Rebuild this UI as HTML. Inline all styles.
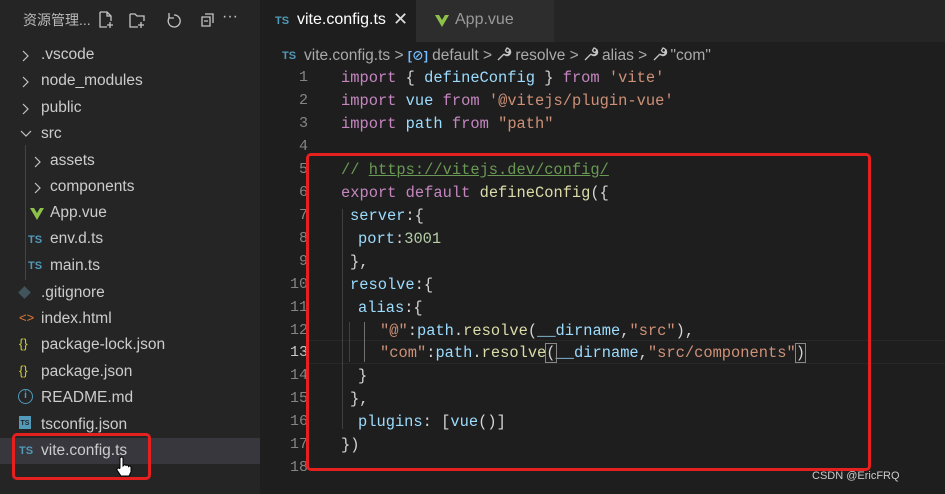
<!DOCTYPE html>
<html><head><meta charset="utf-8"><style>
*{margin:0;padding:0;box-sizing:border-box}
body{width:945px;height:494px;background:#1e1e1e;position:relative;overflow:hidden;font-family:"Liberation Sans","Noto Sans CJK SC",sans-serif;color:#ccc}
.side{position:absolute;left:0;top:0;width:260px;height:494px;background:#252526}
.hdr{position:absolute;left:23px;top:10px;font-size:14px;color:#bbb}
.row{position:absolute;font-size:15.5px;color:#ccc;white-space:nowrap}
.chev{position:absolute;width:12px;height:14px}
.ts{font-family:"Liberation Sans",sans-serif;font-weight:bold;font-size:11px;color:#519aba;position:absolute}
.tabs{position:absolute;left:260px;top:0;width:685px;height:42px;background:#252526}
.ln{position:absolute;width:308px;text-align:right;color:#858585;font-family:"Liberation Mono",monospace;font-size:15px}
.cl{position:absolute;left:341px;white-space:pre;font-family:"Liberation Mono",monospace;font-size:15.4px;color:#d4d4d4}
.k{color:#c586c0}.v{color:#9cdcfe}.s{color:#ce9178}.f{color:#dcdcaa}.c{color:#6a9955}.n{color:#b5cea8}
.wr{display:inline-block;vertical-align:-2px;margin-right:3px}
</style></head><body>
<svg width="0" height="0" style="position:absolute"><defs>
<symbol id="cr" viewBox="0 0 12 14"><path d="M3 2l5 5-5 5" fill="none" stroke="#c5c5c5" stroke-width="1.2"/></symbol>
<symbol id="wr" viewBox="0 0 16 16"><path d="M2 14l6-6M8 8a3.5 3.5 0 1 0 3-6l-1.5 2.5 1 1.5 2 .5L14 4a3.5 3.5 0 0 1-6 4" fill="none" stroke="#c5c5c5" stroke-width="1.3"/></symbol>
</defs></svg>
<div class="side">
<div class="hdr">资源管理...</div>
<svg style="position:absolute;left:98px;top:11px" width="150" height="18" fill="none" stroke="#c5c5c5" stroke-width="1.3">
<path d="M2 1h7l4 4v5M2 1v15h7M9 1v4h4M12 11v6M9 14h6"/>
<path d="M32 3h5l2 2h7v5M32 3v13h8M43 11v6M40 14h6"/>
<path d="M76 4a6 6 0 1 1-5 3M71 2v5h5"/>
<path d="M104 6h8v9h-8zM107 3h8v9M106 10h4"/>
</svg>
<div style="position:absolute;left:222px;top:8px;font-size:16px;color:#c5c5c5">···</div>
<svg class="chev" style="left:20px;top:49px"><use href="#cr"/></svg><div class="row" style="left:41px;top:46px">.vscode</div>
<svg class="chev" style="left:20px;top:75px"><use href="#cr"/></svg><div class="row" style="left:41px;top:72px">node_modules</div>
<svg class="chev" style="left:20px;top:102px"><use href="#cr"/></svg><div class="row" style="left:41px;top:99px">public</div>
<svg class="chev" style="left:20px;top:127px;transform:rotate(90deg)"><use href="#cr"/></svg><div class="row" style="left:41px;top:125px">src</div>
<div style="position:absolute;left:25px;top:145px;width:1px;height:135px;background:#444"></div>
<svg class="chev" style="left:32px;top:155px"><use href="#cr"/></svg><div class="row" style="left:50px;top:152px">assets</div>
<svg class="chev" style="left:32px;top:181px"><use href="#cr"/></svg><div class="row" style="left:50px;top:178px">components</div>
<svg style="position:absolute;left:30px;top:208px" width="14" height="12"><path d="M0 0h4l3 5 3-5h4L7 12z" fill="#8dc149"/></svg><div class="row" style="left:50px;top:204px">App.vue</div>
<div class="ts" style="left:28px;top:234px">TS</div><div class="row" style="left:50px;top:230px">env.d.ts</div>
<div class="ts" style="left:28px;top:260px">TS</div><div class="row" style="left:50px;top:257px">main.ts</div>
<div style="position:absolute;left:20px;top:288px;width:9px;height:9px;background:#41535b;transform:rotate(45deg)"></div><div class="row" style="left:41px;top:284px">.gitignore</div>
<div class="row" style="left:19px;top:310px;color:#e37933;font-size:13px">&lt;&gt;</div><div class="row" style="left:41px;top:310px">index.html</div>
<div class="row" style="left:19px;top:336px;color:#cbcb41;font-size:13px">{}</div><div class="row" style="left:41px;top:336px">package-lock.json</div>
<div class="row" style="left:19px;top:363px;color:#cbcb41;font-size:13px">{}</div><div class="row" style="left:41px;top:363px">package.json</div>
<div style="position:absolute;left:18px;top:389px;width:15px;height:15px;border:1.5px solid #519aba;border-radius:50%;color:#519aba;font-size:10px;text-align:center;line-height:12px;font-weight:bold">i</div><div class="row" style="left:41px;top:389px">README.md</div>
<div style="position:absolute;left:19px;top:416px;width:12px;height:13px;background:#519aba;color:#252526;font-size:7px;font-weight:bold;text-align:center;padding-top:4px">TS</div><div class="row" style="left:41px;top:416px">tsconfig.json</div>
<div style="position:absolute;left:0;top:438px;width:260px;height:26px;background:#37373d"></div>
<div class="ts" style="left:19px;top:445px">TS</div><div class="row" style="left:41px;top:442px">vite.config.ts</div>
<div style="position:absolute;left:12px;top:433px;width:139px;height:47px;border:3px solid #e5201f;border-radius:5px"></div>
<svg style="position:absolute;left:114px;top:456px" width="18" height="22"><path d="M6 12V2.5a1.5 1.5 0 0 1 3 0V10l1-1a1.5 1.5 0 0 1 2 0.5 1.5 1.5 0 0 1 2.5 1 1.5 1.5 0 0 1 2.5 1.5v4l-2 4H7l-4-6a1.5 1.5 0 0 1 2.5-1.5z" fill="#fff" stroke="#000" stroke-width="1"/></svg>
</div>
<div class="tabs">
<div style="position:absolute;left:0;top:0;width:156px;height:42px;background:#1e1e1e"></div>
<div class="ts" style="left:15px;top:15px">TS</div>
<div style="position:absolute;left:37px;top:11px;font-size:16px;color:#fff">vite.config.ts</div>
<div style="position:absolute;left:133px;top:9px;font-size:18px;color:#ddd">✕</div>
<div style="position:absolute;left:156px;top:0;width:138px;height:42px;background:#2d2d2d"></div>
<svg style="position:absolute;left:175px;top:15px" width="14" height="12"><path d="M0 0h4l3 5 3-5h4L7 12z" fill="#8dc149"/></svg>
<div style="position:absolute;left:195px;top:11px;font-size:16px;color:#999">App.vue</div>
</div>
<div class="ts" style="left:282px;top:50px">TS</div>
<div style="position:absolute;left:304px;top:46px;font-size:15.5px;color:#aaa;white-space:nowrap">vite.config.ts &gt; <span style="color:#75beff;font-size:12px;font-weight:bold">[⊘]</span> default &gt; <svg class="wr" width="16" height="16"><use href="#wr"/></svg>resolve &gt; <svg class="wr" width="16" height="16"><use href="#wr"/></svg>alias &gt; <svg class="wr" width="16" height="16"><use href="#wr"/></svg>"com"</div>
<div style="position:absolute;left:308px;top:340px;width:637px;height:24px;border-top:1px solid #282828;border-bottom:1px solid #282828"></div>
<div class="ln" style="top:69px">1</div><div class="ln" style="top:92px">2</div><div class="ln" style="top:115px">3</div><div class="ln" style="top:138px">4</div><div class="ln" style="top:161px">5</div><div class="ln" style="top:184px">6</div><div class="ln" style="top:207px">7</div><div class="ln" style="top:230px">8</div><div class="ln" style="top:253px">9</div><div class="ln" style="top:276px">10</div><div class="ln" style="top:299px">11</div><div class="ln" style="top:322px">12</div><div class="ln" style="top:344px;color:#c6c6c6">13</div><div class="ln" style="top:367px">14</div><div class="ln" style="top:390px">15</div><div class="ln" style="top:413px">16</div><div class="ln" style="top:436px">17</div><div class="ln" style="top:459px">18</div>
<div style="position:absolute;left:342px;top:209px;width:1px;height:220px;background:#404040"></div>
<div style="position:absolute;left:349px;top:322px;width:1px;height:40px;background:#404040"></div>
<div style="position:absolute;left:364px;top:322px;width:1px;height:40px;background:#707070"></div>
<div class="cl" style="top:69px"><span class="k">import</span> { <span class="v">defineConfig</span> } <span class="k">from</span> <span class="s">'vite'</span></div>
<div class="cl" style="top:92px"><span class="k">import</span> <span class="v">vue</span> <span class="k">from</span> <span class="s">'@vitejs/plugin-vue'</span></div>
<div class="cl" style="top:115px"><span class="k">import</span> <span class="v">path</span> <span class="k">from</span> <span class="s">"path"</span></div>
<div class="cl" style="top:161px"><span class="c">// <u>https://vitejs.dev/config/</u></span></div>
<div class="cl" style="top:184px"><span class="k">export</span> <span class="k">default</span> <span class="f">defineConfig</span>({</div>
<div class="cl" style="top:207px;left:350px"><span class="v">server</span>:{</div>
<div class="cl" style="top:230px;left:358px"><span class="v">port</span>:<span class="n">3001</span></div>
<div class="cl" style="top:253px;left:350px">},</div>
<div class="cl" style="top:276px;left:350px"><span class="v">resolve</span>:{</div>
<div class="cl" style="top:299px;left:358px"><span class="v">alias</span>:{</div>
<div class="cl" style="top:322px;left:380px"><span class="s">"@"</span>:<span class="v">path</span>.<span class="f">resolve</span>(<span class="v">__dirname</span>,<span class="s">"src"</span>),</div>
<div class="cl" style="top:344px;left:380px"><span class="s">"com"</span>:<span class="v">path</span>.<span class="f">resolve</span><span style="outline:1px solid #888">(</span><span class="v">__dirname</span>,<span class="s">"src/components"</span><span style="outline:1px solid #888">)</span></div>
<div class="cl" style="top:367px;left:358px">}</div>
<div class="cl" style="top:390px;left:350px">},</div>
<div class="cl" style="top:413px;left:358px"><span class="v">plugins</span>: [<span class="v">vue</span>()]</div>
<div class="cl" style="top:436px">})</div>
<div style="position:absolute;left:306px;top:153px;width:565px;height:318px;border:3px solid #e5201f;border-radius:5px"></div>
<div style="position:absolute;left:812px;top:470px;font-size:11px;color:#ccc">CSDN @EricFRQ</div>
</body></html>
